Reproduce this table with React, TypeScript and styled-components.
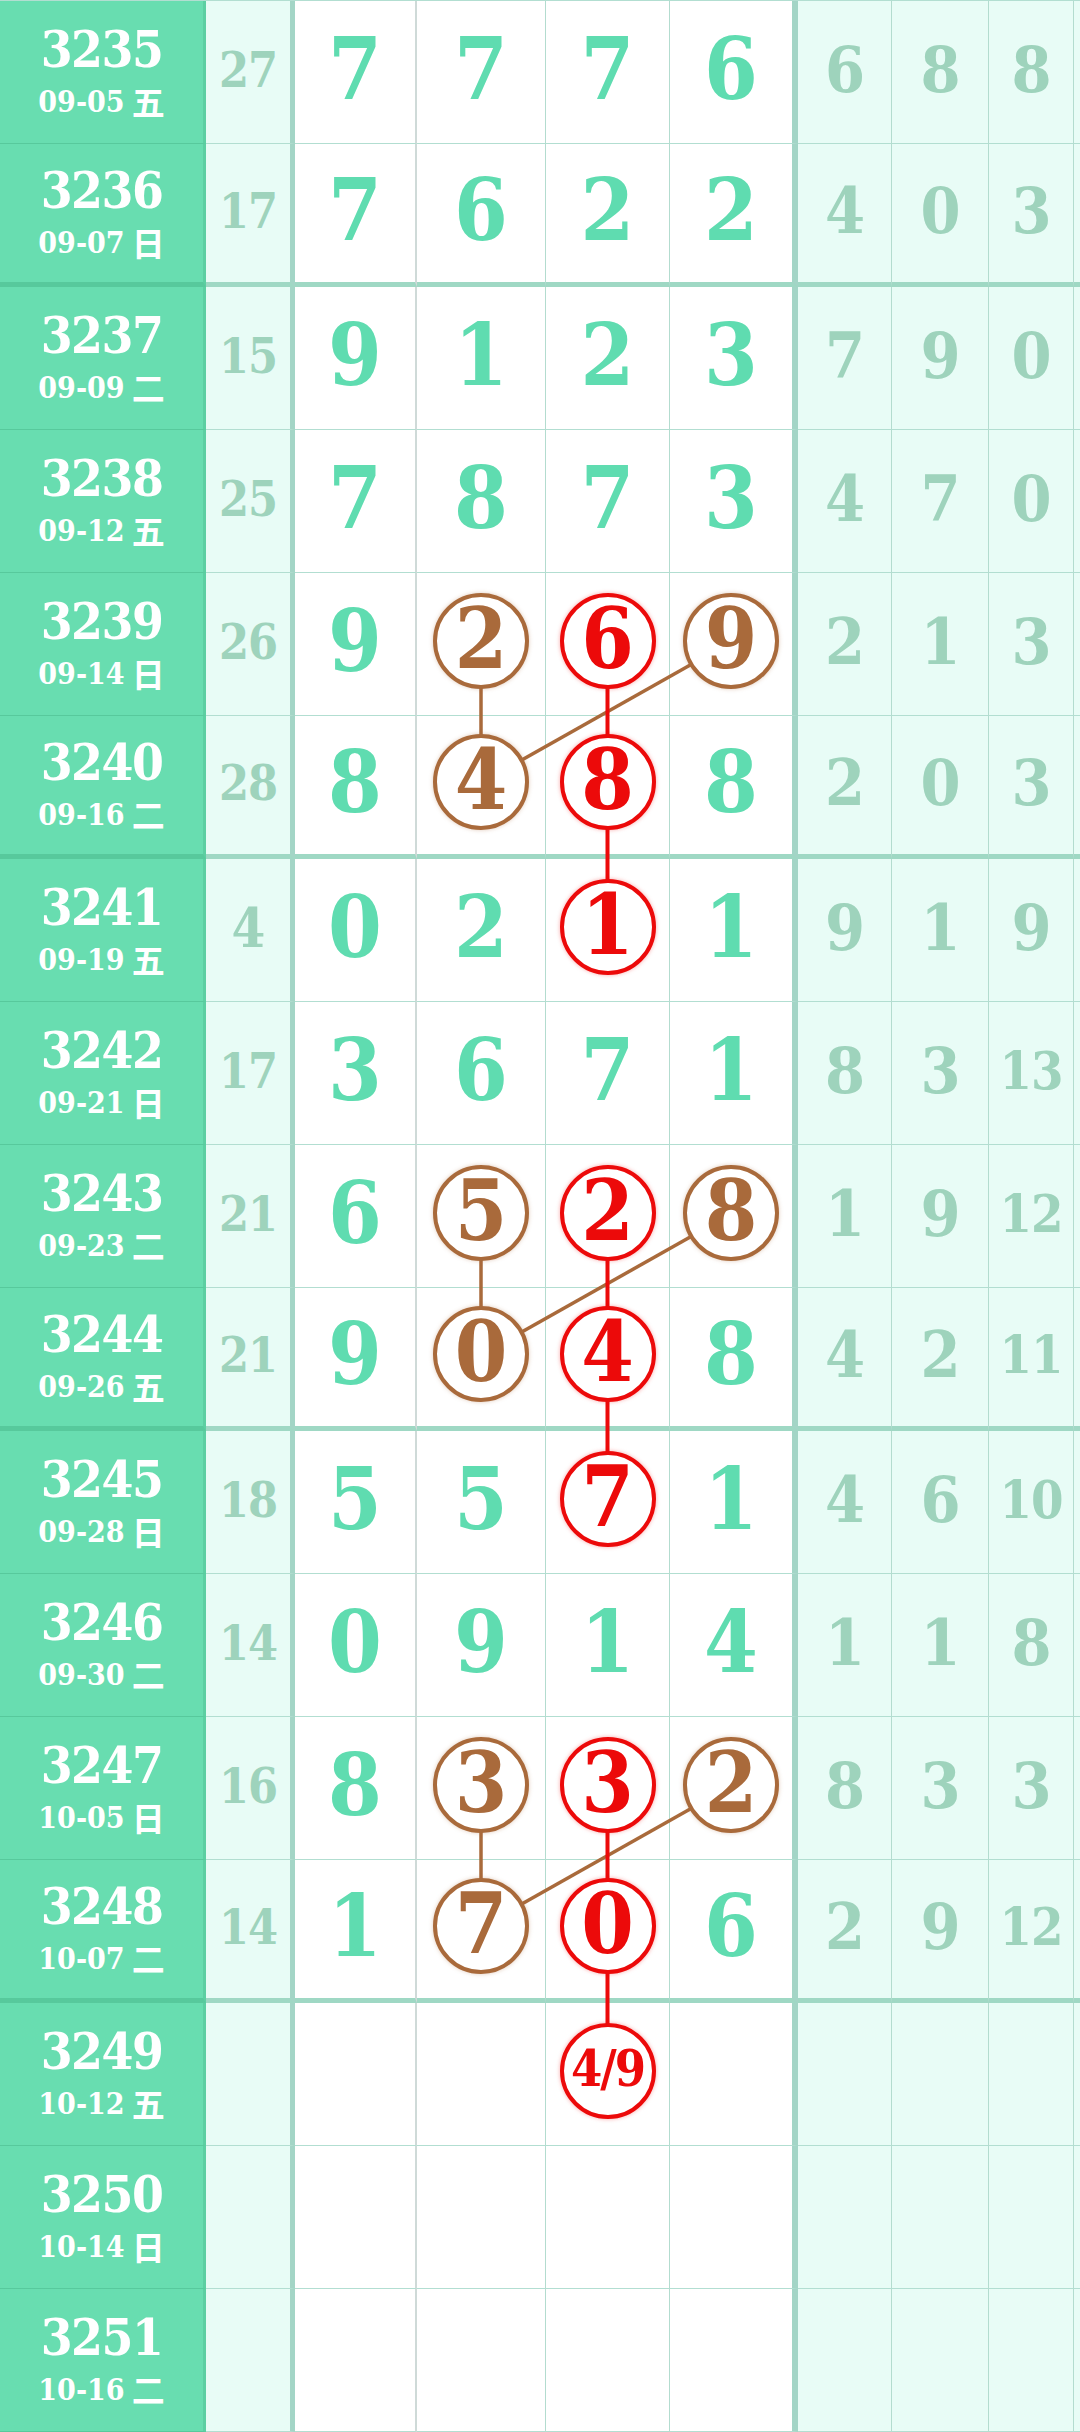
import React from 'react';
import styled, { createGlobalStyle, css } from 'styled-components';

const GlobalStyle = createGlobalStyle`
  html, body {
    margin: 0;
    padding: 0;
    background: #e8fcf6;
  }
  body {
    font-family: 'DejaVu Serif Condensed', 'DejaVu Serif', serif;
  }
`;

// column widths incl. right border, and border sizes
const COLS = [206, 89, 122, 129, 124, 128, 94, 97, 85];
const BORDERS = [3, 5, 2, 1, 1, 6, 1, 1, 1];
const ROW_H = 143;
const THICK_ROWS = [1, 5, 9, 13];

const BROWN = '#a96a3b';
const RED = '#ec0a0a';

type Mark = 'b' | 'r' | null;

type Row = {
  issue: string;
  date: string;
  wd: string;
  sum?: string;
  nums?: string[];
  rest?: string[];
  marks?: Mark[];
};

const rows: Row[] = [
  { issue: '3235', date: '09-05', wd: '五', sum: '27', nums: ['7', '7', '7', '6'], rest: ['6', '8', '8'] },
  { issue: '3236', date: '09-07', wd: '日', sum: '17', nums: ['7', '6', '2', '2'], rest: ['4', '0', '3'] },
  { issue: '3237', date: '09-09', wd: '二', sum: '15', nums: ['9', '1', '2', '3'], rest: ['7', '9', '0'] },
  { issue: '3238', date: '09-12', wd: '五', sum: '25', nums: ['7', '8', '7', '3'], rest: ['4', '7', '0'] },
  { issue: '3239', date: '09-14', wd: '日', sum: '26', nums: ['9', '2', '6', '9'], rest: ['2', '1', '3'], marks: [null, 'b', 'r', 'b'] },
  { issue: '3240', date: '09-16', wd: '二', sum: '28', nums: ['8', '4', '8', '8'], rest: ['2', '0', '3'], marks: [null, 'b', 'r', null] },
  { issue: '3241', date: '09-19', wd: '五', sum: '4', nums: ['0', '2', '1', '1'], rest: ['9', '1', '9'], marks: [null, null, 'r', null] },
  { issue: '3242', date: '09-21', wd: '日', sum: '17', nums: ['3', '6', '7', '1'], rest: ['8', '3', '13'] },
  { issue: '3243', date: '09-23', wd: '二', sum: '21', nums: ['6', '5', '2', '8'], rest: ['1', '9', '12'], marks: [null, 'b', 'r', 'b'] },
  { issue: '3244', date: '09-26', wd: '五', sum: '21', nums: ['9', '0', '4', '8'], rest: ['4', '2', '11'], marks: [null, 'b', 'r', null] },
  { issue: '3245', date: '09-28', wd: '日', sum: '18', nums: ['5', '5', '7', '1'], rest: ['4', '6', '10'], marks: [null, null, 'r', null] },
  { issue: '3246', date: '09-30', wd: '二', sum: '14', nums: ['0', '9', '1', '4'], rest: ['1', '1', '8'] },
  { issue: '3247', date: '10-05', wd: '日', sum: '16', nums: ['8', '3', '3', '2'], rest: ['8', '3', '3'], marks: [null, 'b', 'r', 'b'] },
  { issue: '3248', date: '10-07', wd: '二', sum: '14', nums: ['1', '7', '0', '6'], rest: ['2', '9', '12'], marks: [null, 'b', 'r', null] },
  { issue: '3249', date: '10-12', wd: '五', nums: ['', '', '4/9', ''], marks: [null, null, 'r', null] },
  { issue: '3250', date: '10-14', wd: '日' },
  { issue: '3251', date: '10-16', wd: '二' },
];

// [row, numIndex] -> [row, numIndex]
const links: { from: [number, number]; to: [number, number]; color: string }[] = [];
[4, 8, 12].forEach((r) => {
  links.push({ from: [r, 1], to: [r + 1, 1], color: BROWN });
  links.push({ from: [r, 3], to: [r + 1, 1], color: BROWN });
  links.push({ from: [r, 2], to: [r + 1, 2], color: RED });
  links.push({ from: [r + 1, 2], to: [r + 2, 2], color: RED });
});

const colStart = (i: number) => COLS.slice(0, i).reduce((a, b) => a + b, 0);
const cx = (num: number) => {
  const c = num + 2;
  return colStart(c) + (COLS[c] - BORDERS[c]) / 2;
};
const cy = (r: number) => r * ROW_H + (ROW_H - (THICK_ROWS.includes(r) ? 5 : 1)) / 2 - 2;

const Board = styled.div`
  position: relative;
  width: 1080px;
  display: grid;
  grid-template-columns: ${COLS.map((c) => `${c}px`).join(' ')} 1fr;
  grid-auto-rows: ${ROW_H}px;
  background: #e8fcf6;
  border-top: 1px solid #b2ded1;
  box-sizing: border-box;
`;

const Cell = styled.div<{ $kind: 'issue' | 'sum' | 'main' | 'rest'; $thick: boolean; $br: number; $brColor: string }>`
  box-sizing: border-box;
  display: flex;
  align-items: center;
  justify-content: center;
  border-right: ${(p) => p.$br}px solid ${(p) => p.$brColor};
  border-bottom: ${(p) => (p.$thick ? 5 : 1)}px solid ${(p) => (p.$kind === 'issue' ? '#57c99c' : p.$thick ? '#9fd8c4' : '#b2ded1')};
  ${(p) =>
    p.$kind === 'issue' &&
    css`
      background: #68ddb0;
      flex-direction: column;
      gap: 14px;
      color: #ffffff;
      font-weight: bold;
    `}
  ${(p) => p.$kind === 'sum' && css`background: #e8fcf6;`}
  ${(p) => p.$kind === 'main' && css`background: #ffffff;`}
  ${(p) => p.$kind === 'rest' && css`background: #e8fcf6;`}
`;

const Filler = styled.div<{ $thick: boolean }>`
  box-sizing: border-box;
  border-bottom: ${(p) => (p.$thick ? 5 : 1)}px solid ${(p) => (p.$thick ? '#9fd8c4' : '#b2ded1')};
`;

const Issue = styled.div`
  font-size: 51px;
  line-height: 46px;
  letter-spacing: -1.5px;
`;

const DateLine = styled.div`
  font-size: 30px;
  line-height: 32px;
  height: 32px;
  display: flex;
  align-items: center;
  gap: 7px;
`;

const Weekday = styled.span`
  font-family: 'Noto Sans CJK SC', sans-serif;
  font-weight: 700;
  font-size: 33px;
  line-height: 32px;
  margin-top: -2px;
`;

const Faded = styled.span<{ $size: number }>`
  color: #9ed3bc;
  font-weight: bold;
  font-size: ${(p) => p.$size}px;
  line-height: 1;
  margin-top: -4px;
  letter-spacing: -1px;
`;

const Digit = styled.span`
  color: #5fdcb0;
  font-weight: bold;
  font-size: 86px;
  line-height: 1;
  margin-top: -6px;
`;

const Ring = styled.span<{ $color: string; $small: boolean }>`
  position: relative;
  z-index: 2;
  box-sizing: border-box;
  width: 96px;
  height: 96px;
  margin-top: -6px;
  border-radius: 50%;
  border: 4px solid ${(p) => p.$color};
  background: #ffffff;
  box-shadow: 0 0 4px ${(p) => (p.$color === RED ? 'rgba(236,10,10,0.35)' : 'rgba(169,106,59,0.35)')};
  color: ${(p) => p.$color};
  display: flex;
  align-items: center;
  justify-content: center;
  font-weight: bold;
  font-size: ${(p) => (p.$small ? 50 : 84)}px;
  line-height: 1;
  letter-spacing: ${(p) => (p.$small ? '-2px' : '0')};
  padding-bottom: 4px;
`;

const Links = styled.svg`
  position: absolute;
  left: 0;
  top: 0;
  z-index: 1;
  pointer-events: none;
`;

const brColor = (i: number) => {
  if (i === 0) return '#5ccfa2';
  if (i === 1 || i === 5) return '#a3d5c6';
  if (i === 2) return '#cfdad8';
  return '#b3dccf';
};

export default function App() {
  return (
    <>
      <GlobalStyle />
      <Board>
        {rows.map((row, r) => {
          const thick = THICK_ROWS.includes(r);
          return (
            <React.Fragment key={row.issue}>
              <Cell $kind="issue" $thick={thick} $br={BORDERS[0]} $brColor={brColor(0)}>
                <Issue>{row.issue}</Issue>
                <DateLine>
                  {row.date}
                  <Weekday>{row.wd}</Weekday>
                </DateLine>
              </Cell>
              <Cell $kind="sum" $thick={thick} $br={BORDERS[1]} $brColor={brColor(1)}>
                {row.sum && <Faded $size={row.sum.length > 1 ? 48 : 54}>{row.sum}</Faded>}
              </Cell>
              {[0, 1, 2, 3].map((n) => {
                const v = row.nums ? row.nums[n] : '';
                const m = row.marks ? row.marks[n] : null;
                return (
                  <Cell key={n} $kind="main" $thick={thick} $br={BORDERS[n + 2]} $brColor={brColor(n + 2)}>
                    {m ? (
                      <Ring $color={m === 'r' ? RED : BROWN} $small={v.length > 1}>
                        {v}
                      </Ring>
                    ) : (
                      v && <Digit>{v}</Digit>
                    )}
                  </Cell>
                );
              })}
              {[0, 1, 2].map((k) => {
                const v = row.rest ? row.rest[k] : '';
                return (
                  <Cell key={`r${k}`} $kind="rest" $thick={thick} $br={BORDERS[k + 6]} $brColor={brColor(k + 6)}>
                    {v && <Faded $size={v.length > 1 ? 52 : 64}>{v}</Faded>}
                  </Cell>
                );
              })}
              <Filler $thick={thick} />
            </React.Fragment>
          );
        })}
        <Links width={1080} height={rows.length * ROW_H}>
          {links.map((l, i) => (
            <line
              key={i}
              x1={cx(l.from[1])}
              y1={cy(l.from[0])}
              x2={cx(l.to[1])}
              y2={cy(l.to[0])}
              stroke={l.color}
              strokeWidth={l.color === RED ? 4 : 3.5}
            />
          ))}
        </Links>
      </Board>
    </>
  );
}
